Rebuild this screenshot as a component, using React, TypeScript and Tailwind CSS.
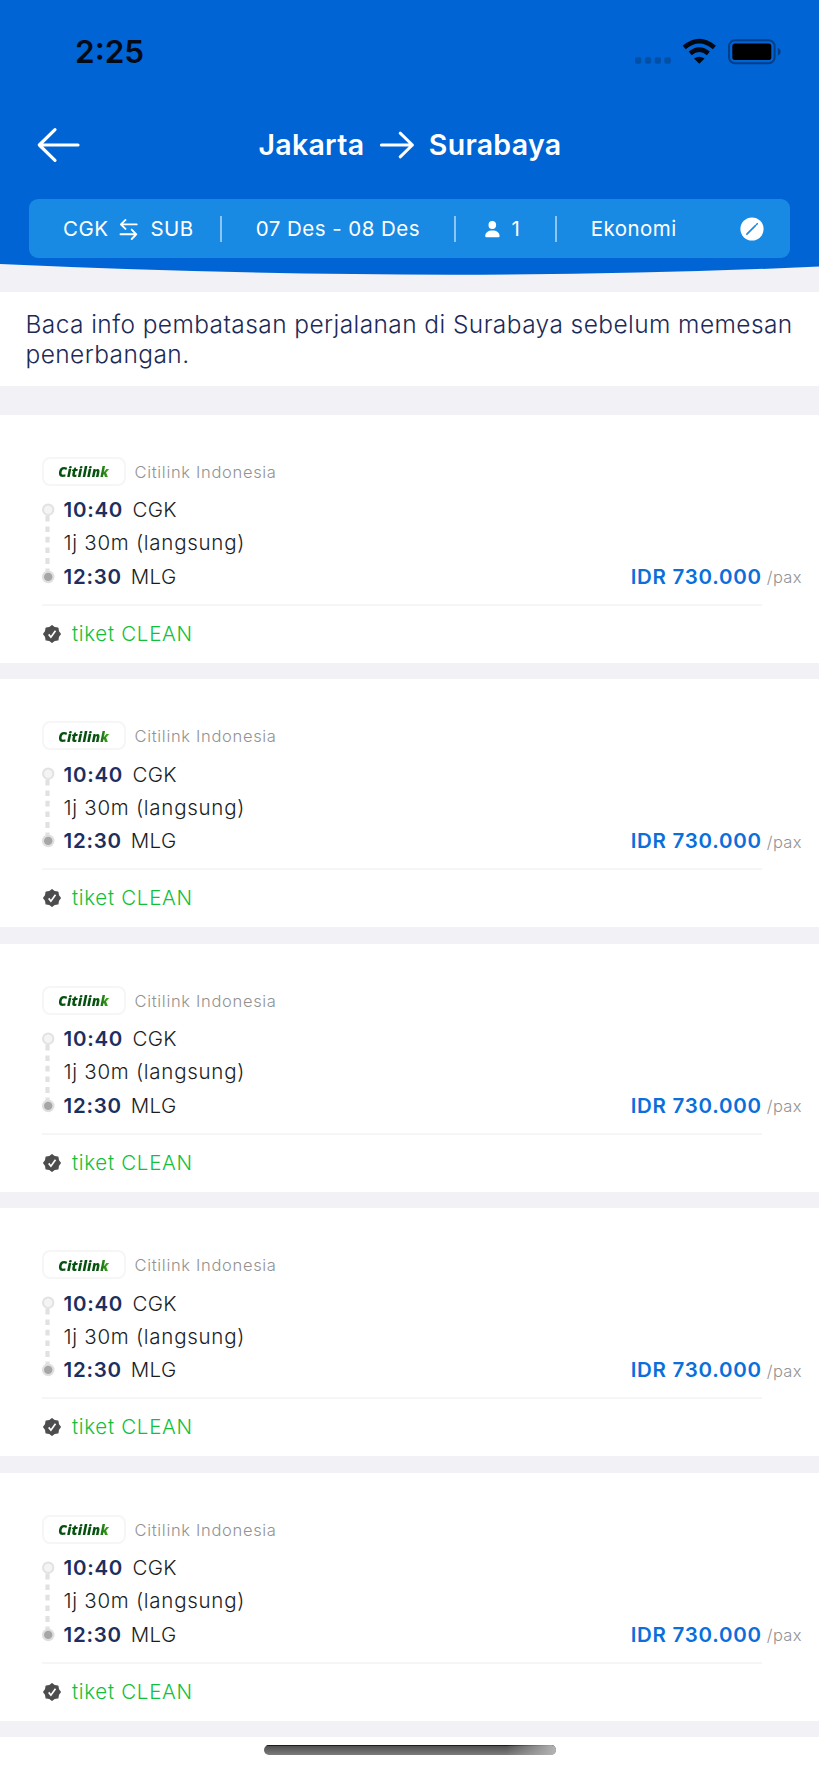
interface Flight {
  airline: string;
  brand: string;
  depart: string;
  from: string;
  duration: string;
  arrive: string;
  to: string;
  price: string;
  badge: string;
}

const flights: Flight[] = Array.from({ length: 5 }, () => ({
  airline: "Citilink Indonesia",
  brand: "Citilink",
  depart: "10:40",
  from: "CGK",
  duration: "1j 30m (langsung)",
  arrive: "12:30",
  to: "MLG",
  price: "IDR 730.000",
  badge: "tiket CLEAN",
}));

function StatusBar() {
  return (
    <div className="flex h-[104px] items-center pl-[75px] pr-[38px]">
      <span className="text-[31.5px] leading-[32px] font-semibold text-[#020a18]">2:25</span>
      <svg className="ml-auto" width="147" height="32" viewBox="634 36 147 32" fill="none">
        <g fill="#0050a8">
          <rect x="635" y="57.3" width="6.4" height="6.4" rx="1.8" />
          <rect x="644.8" y="57.3" width="6.4" height="6.4" rx="1.8" />
          <rect x="654.6" y="57.3" width="6.4" height="6.4" rx="1.8" />
          <rect x="664.4" y="57.3" width="6.4" height="6.4" rx="1.8" />
        </g>
        <g stroke="#000814" strokeWidth="4.6">
          <path d="M684.2 47.6 Q699.3 34.8 714.4 47.6" />
          <path d="M690.2 53.4 Q699.3 46 708.4 53.4" />
        </g>
        <path d="M694 58.6 Q699.3 54.8 704.6 58.6 L699.3 63.7 Z" fill="#000814" />
        <rect x="729" y="40.2" width="45.6" height="23" rx="6" stroke="#003f88" strokeWidth="2" />
        <rect x="732.3" y="43.5" width="39" height="16.5" rx="2.8" fill="#000" />
        <path d="M777.8 48 Q780.7 49 780.7 51.8 Q780.7 54.6 777.8 55.8 Z" fill="#003f88" />
      </svg>
    </div>
  );
}

function TitleBar() {
  return (
    <div className="mt-4 flex h-[50px] items-center pl-9 text-white">
      <svg width="46" height="38" viewBox="36 126 46 38" fill="none" stroke="currentColor" strokeWidth="3.2" strokeLinecap="round" strokeLinejoin="round">
        <path d="M55 129.7 L39.3 145 L55 160.4 M39.3 145 H78" />
      </svg>
      <div className="ml-[176.5px] flex items-center text-[28.5px] font-semibold tracking-[0.28px]">
        <span>Jakarta</span>
        <svg className="ml-[15px] mr-[13.5px]" width="36" height="30" viewBox="379 130 36 30" fill="none" stroke="currentColor" strokeWidth="3" strokeLinecap="round" strokeLinejoin="round">
          <path d="M400.2 133.2 L412.4 145 L400.2 156.8 M412.4 145 H381.4" />
        </svg>
        <span>Surabaya</span>
      </div>
    </div>
  );
}

function Divider() {
  return <div className="mb-[2px] h-[26px] w-[2px] bg-[#8cc5f1]" />;
}

function SearchSummary() {
  return (
    <div className="mx-[29px] mt-[29px] grid h-[59px] grid-cols-[190.8px_2px_232.3px_2px_98.6px_2px_1fr] items-center rounded-[9px] bg-[#198ae3] pt-[2px] text-[20.5px] tracking-[0.45px] text-white">
      <div className="flex items-center pl-[34px]">
        <span>CGK</span>
        <svg className="mb-px mr-[11px] ml-[11px]" width="20" height="24" viewBox="119.5 217 20 24" fill="none" stroke="currentColor" strokeWidth="1.9" strokeLinecap="round" strokeLinejoin="round">
          <path d="M126 219.9 L121.4 224.4 L126 228.9 M121.4 224.4 H137.2" />
          <path d="M132.2 229.6 L136.8 234.3 L132.2 239 M136.8 234.3 H121" />
        </svg>
        <span>SUB</span>
      </div>
      <Divider />
      <span className="pl-[34px] whitespace-nowrap">07 Des - 08 Des</span>
      <Divider />
      <div className="flex items-center pl-[28.5px]">
        <svg width="15" height="17" viewBox="0 0 15 17" fill="currentColor">
          <ellipse cx="7.3" cy="4.1" rx="3.8" ry="4" />
          <path d="M0.2 15 C0.4 11.6 3.2 9.6 7.4 9.6 C11.6 9.6 14.4 11.6 14.6 15 Q14.6 16.3 13.4 16.3 H1.4 Q0.2 16.3 0.2 15 Z" />
        </svg>
        <span className="ml-3">1</span>
      </div>
      <Divider />
      <div className="flex items-center justify-between pr-[26px] pl-[34px]">
        <span>Ekonomi</span>
        <svg className="mb-px" width="24" height="24" viewBox="0 0 24 24">
          <circle cx="12" cy="12" r="11.6" fill="#fff" />
          <path d="M6.9 17.1 L15.4 8.6 M16.5 7.5 L17.3 6.7" stroke="#198ae3" strokeWidth="1.6" strokeLinecap="round" />
        </svg>
      </div>
    </div>
  );
}

function Header() {
  return (
    <header>
      <div className="h-[264px] bg-[#0064d4]">
        <StatusBar />
        <TitleBar />
        <SearchSummary />
      </div>
      <svg className="block" width="819" height="28" viewBox="0 0 819 28">
        <path d="M0 -1 V0 Q440 20 819 2.5 V-1 Z" fill="#0064d4" />
      </svg>
    </header>
  );
}

function RouteRail() {
  return (
    <svg className="shrink-0" width="13" height="101" viewBox="0 0 13 101">
      <path d="M5.5 22.4V28.6M5.5 33.4V39M5.5 43.8V49.6M5.5 54.4V60M5.5 65V71M5.5 75.6V80" stroke="#e1e1e1" strokeWidth="4.2" />
      <circle cx="6.2" cy="16.7" r="5.2" fill="#f4f4f4" stroke="#e2e2e2" strokeWidth="2" />
      <circle cx="6.2" cy="83.9" r="6.3" fill="#dfdfdf" />
      <circle cx="6.2" cy="83.9" r="4.2" fill="#a6a6a6" />
    </svg>
  );
}

function VerifiedIcon() {
  return (
    <svg width="20" height="20" viewBox="-10 -10 20 20">
      <path
        d="M0 -8.2 L2.6 -6.3 L5.8 -5.8 L6.3 -2.6 L8.2 0 L6.3 2.6 L5.8 5.8 L2.6 6.3 L0 8.2 L-2.6 6.3 L-5.8 5.8 L-6.3 2.6 L-8.2 0 L-6.3 -2.6 L-5.8 -5.8 L-2.6 -6.3 Z"
        fill="#4d4d4f"
        stroke="#4d4d4f"
        strokeWidth="1.4"
        strokeLinejoin="round"
      />
      <path d="M-3.3 0.4 L-1.1 3.2 L3.5 -3.2" fill="none" stroke="#fff" strokeWidth="1.7" />
    </svg>
  );
}

function FlightCard({ flight }: { flight: Flight }) {
  return (
    <article className="h-[248px] bg-white pt-[42px] pl-[42px]">
      <div className="flex h-[29.4px] items-center">
        <div className="flex h-[29.4px] w-[84px] items-center justify-center rounded-[8px] border-2 border-[#f6f6f6] pt-[2px]">
          <span className="bg-linear-to-r from-[#06500f] from-75% to-[#45b81c] bg-clip-text pr-px font-['Open_Sans'] text-[13.5px] leading-[18px] font-extrabold tracking-[0.2px] text-transparent italic">
            {flight.brand}
          </span>
        </div>
        <span className="ml-[8.5px] pt-[2px] text-[16.5px] font-light tracking-[0.68px] text-[#929292]">{flight.airline}</span>
      </div>
      <div className="mt-[6.9px] flex h-[100.8px]">
        <RouteRail />
        <div className="ml-[8.5px] grid flex-1 grid-rows-3 items-center pt-[1px] pr-[17px] text-[20.5px] font-light tracking-[0.73px] text-[#1c1c1e]">
          <div className="flex items-center">
            <span className="font-semibold text-[#1c2f5e]">{flight.depart}</span>
            <span className="ml-[9.5px] tracking-[0.3px]">{flight.from}</span>
          </div>
          <span>{flight.duration}</span>
          <div className="flex items-center">
            <span className="font-semibold text-[#1c2f5e]">{flight.arrive}</span>
            <span className="ml-[9px] tracking-[0.4px]">{flight.to}</span>
            <span className="ml-auto font-semibold text-[#0a6fdb]">{flight.price}</span>
            <span className="ml-[5px] pt-px text-[16.5px] tracking-[0.4px] text-[#929292]">/pax</span>
          </div>
        </div>
      </div>
      <div className="mt-[10px] h-[2px] w-[720px] bg-[#f6f6f6]" />
      <div className="mt-[11px] flex h-[33.6px] items-center pt-[1px]">
        <VerifiedIcon />
        <span className="ml-[10px] text-[20.5px] font-light tracking-[0.7px] text-[#12bf3a]">{flight.badge}</span>
      </div>
    </article>
  );
}

export default function App() {
  return (
    <div className="relative flex h-[1772px] w-[819px] flex-col overflow-hidden bg-[#f1f1f6] font-['Inter',sans-serif]">
      <Header />
      <p className="h-[94px] shrink-0 bg-white pt-[18px] pl-[25.5px] text-[24.5px] leading-[29.5px] font-light tracking-[0.41px] text-[#1c2a58]">
        Baca info pembatasan perjalanan di Surabaya sebelum memesan
        <br />
        penerbangan.
      </p>
      <main className="mt-[28.6px] flex flex-col gap-[16.5px]">
        {flights.map((flight, i) => (
          <FlightCard key={i} flight={flight} />
        ))}
        <div className="h-10 bg-white" />
      </main>
      <div className="absolute bottom-[17px] left-[264px] h-[10px] w-[292px] overflow-hidden rounded-full bg-linear-to-b from-[#4c4c4c] to-[#7c7c7c]">
        <div className="h-[1px] bg-[#1c1c1c]" />
        <div className="-mt-px ml-auto h-[10px] w-[50px] bg-linear-to-r from-transparent to-[#b4b4b4]" />
      </div>
    </div>
  );
}
